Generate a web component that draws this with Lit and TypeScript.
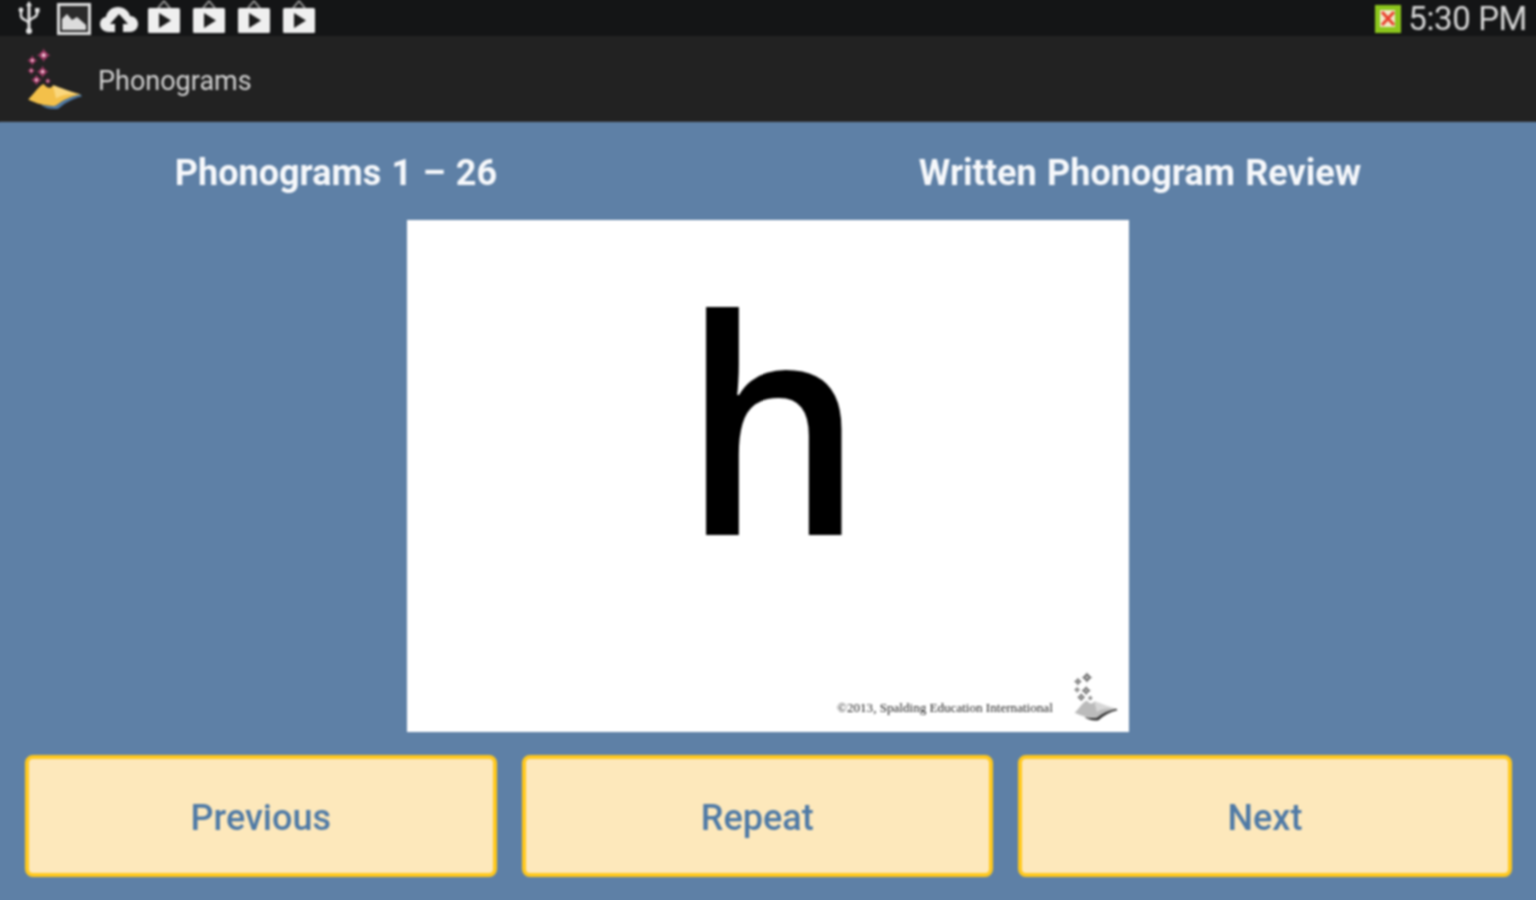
import { LitElement, html, css, svg } from 'lit'
import { customElement } from 'lit/decorators.js'

// little notification icon with the tab on top and a play triangle
const playNote = html`<svg class="note" width="34" height="36" viewBox="0 0 34 36">
  <path d="M11 8 L17 1 L23 8" fill="none" stroke="#8a8a8a" stroke-width="2"/>
  <rect x="1" y="8" width="32" height="25" rx="1.5" fill="#efefef"/>
  <path d="M12 13 L24 20.5 L12 28 Z" fill="#1a1a1a"/>
</svg>`

const star = (x: number, y: number, r: number, c: string, mid: string) => svg`
  <path d="M${x} ${y - r * 1.5} L${x + r * 0.4} ${y - r * 0.4} L${x + r * 1.5} ${y} L${x + r * 0.4} ${y + r * 0.4} L${x} ${y + r * 1.5} L${x - r * 0.4} ${y + r * 0.4} L${x - r * 1.5} ${y} L${x - r * 0.4} ${y - r * 0.4} Z" fill="${c}"/>
  <circle cx="${x}" cy="${y}" r="${r * 0.85}" fill="${c}"/>
  <circle cx="${x}" cy="${y}" r="${r * 0.4}" fill="${mid}"/>
`

const bookLogo = (c1: string, mid: string, c2: string, c3: string, c4: string) => svg`
  ${star(17, 7, 4.5, c1, mid)}${star(6, 12, 3.4, c1, mid)}${star(5, 22, 2.6, c1, mid)}
  ${star(16, 23, 4, c1, mid)}${star(10, 31, 3.6, c1, mid)}${star(21, 32, 2.2, c1, mid)}
  <path d="M2 50 C9 43 12 37 17 35 C20 39 24 40 26 36 C33 38 41 42 53 45 C44 47 36 50 29 56 C22 57 12 55 2 50 Z" fill="${c2}"/>
  <path d="M29 56 C36 50 44 47 53 45 L54 47 C45 49 38 53 31 59 C24 60 18 58 14 55 C19 56 24 57 29 56 Z" fill="${c3}"/>
  <path d="M26 36 C33 38 41 42 53 45 C46 45 37 44 29 49 Z" fill="${c4}" opacity="0.55"/>
`

@customElement('app-root')
export class AppRoot extends LitElement {
  static styles = css`
    :host {
      display: block;
      width: 1536px;
      height: 900px;
      overflow: hidden;
      font-family: Roboto, "Liberation Sans", sans-serif;
    }
    /* blur bleeds at the edges, so the page sticks out 6px on each side */
    .page {
      display: flex;
      flex-direction: column;
      width: 1536px;
      height: 900px;
      margin: -6px;
      padding: 6px;
      background: linear-gradient(#141516 42px, #222222 42px, #222222 128px, #5e80a6 128px);
      filter: blur(1px);
    }
    .status {
      height: 36px;
      flex: none;
      background: #141516;
      display: flex;
      align-items: center;
      padding: 0 9px 0 17px;
      color: #d6d6d6;
    }
    .status .icons {
      display: flex;
      align-items: center;
      gap: 11px;
    }
    .usb { margin-right: 5px; }
    .cloud { margin: 0 -2px; }
    .status .right {
      margin-left: auto;
      display: flex;
      align-items: center;
      gap: 7px;
      font-size: 33px;
      letter-spacing: -0.4px;
    }
    .status .right span { padding-top: 1px; }
    .actionbar {
      height: 86px;
      flex: none;
      background: #222222;
      display: flex;
      align-items: center;
      padding: 4px 0 0 26px;
      gap: 14px;
      color: #d2d2d2;
      font-size: 27px;
      border-bottom: 1px solid #333;
      box-sizing: border-box;
    }
    .headings {
      flex: none;
      height: 98px;
      display: grid;
      grid-template-columns: 622px 744px;
      column-gap: 121px;
      padding: 4px 0 0 25px;
      box-sizing: border-box;
      align-items: center;
      color: #f6f8fb;
      font-size: 36px;
      word-spacing: 1.5px;
      font-weight: 700;
      text-align: center;
    }
    .card {
      flex: none;
      align-self: center;
      width: 722px;
      height: 511.5px;
      background: #fff;
      position: relative;
      display: flex;
      justify-content: center;
      box-sizing: border-box;
      padding-left: 11px;
    }
    .letter {
      font-family: "Open Sans", "Liberation Sans", sans-serif;
      font-size: 300px;
      font-weight: 600;
      line-height: 360px;
      color: #000;
      margin-top: 19px;
      transform: scaleX(0.95);
    }
    .copy {
      position: absolute;
      left: 430px;
      top: 480px;
      font-family: "Liberation Serif", serif;
      font-size: 13.1px;
      line-height: 16px;
      color: #222;
      white-space: nowrap;
      filter: blur(0.7px);
    }
    .mark {
      position: absolute;
      left: 666px;
      top: 450px;
      filter: blur(0.5px);
    }
    .buttons {
      display: grid;
      grid-template-columns: 471.5px 471.5px 494px;
      column-gap: 25px;
      padding: 23.5px 0 0 25px;
    }
    .btn {
      height: 121.5px;
      box-sizing: border-box;
      background: #fde8bb;
      border: 4px solid #ffc81e;
      border-radius: 8px;
      padding-top: 5px;
      display: flex;
      align-items: center;
      justify-content: center;
      color: #4f7aa6;
      font-size: 36px;
      font-weight: 500;
    }
  `

  render() {
    return html`
      <div class="page">
        <div class="status">
          <div class="icons">
            <svg class="usb" width="24" height="36" viewBox="0 0 24 36">
              <path d="M12 3 V33" stroke="#e4e4e4" stroke-width="3" fill="none"/>
              <path d="M12 1 L15 6 H9 Z" fill="#e4e4e4"/>
              <path d="M4 11 V16 C4 20 12 20 12 24 M20 11 V14 C20 18 12 18 12 22" stroke="#e4e4e4" stroke-width="2.4" fill="none"/>
              <circle cx="4" cy="10" r="2.4" fill="#e4e4e4"/>
              <rect x="18" y="8" width="4.5" height="4.5" fill="#e4e4e4"/>
              <circle cx="12" cy="31" r="3" fill="#e4e4e4"/>
            </svg>
            <svg width="34" height="34" viewBox="0 0 34 34">
              <rect x="1.5" y="3.5" width="31" height="29" fill="#2a2a2a" stroke="#dcdcdc" stroke-width="3"/>
              <path d="M5 29 V18 L10 13 L15 19 L20 16 L29 24 V29 Z" fill="#dcdcdc"/>
            </svg>
            <svg class="cloud" width="38" height="34" viewBox="0 0 38 34">
              <path d="M9 31 C3 31 0 27 0 23 C0 19 3 16 6 16 C7 10 12 6 18 6 C24 6 29 10 30 15 C35 15 38 19 38 23 C38 28 34 31 30 31 H23 V23 H28 L19 13 L10 23 H15 V31 Z" fill="#ececec"/>
            </svg>
            ${playNote}${playNote}${playNote}${playNote}
          </div>
          <div class="right">
            <svg width="26" height="30" viewBox="0 0 26 30">
              <rect width="26" height="28" y="2" fill="#8cc61d"/>
              <rect x="5" y="7" width="15" height="17" fill="#f2e9c8"/>
              <path d="M7 9 L19 22 M19 9 L7 22" stroke="#e8402c" stroke-width="3"/>
            </svg>
            <span>5:30 PM</span>
          </div>
        </div>
        <div class="actionbar">
          <svg width="58" height="66" viewBox="0 0 56 64">${bookLogo('#a03a66', '#f0c8d8', '#f3c04a', '#4f7aa6', '#ffe9a8')}</svg>
          <span>Phonograms</span>
        </div>
        <div class="headings">
          <div>Phonograms 1 – 26</div>
          <div>Written Phonogram Review</div>
        </div>
        <div class="card">
          <div class="letter">h</div>
          <div class="copy">©2013, Spalding Education International</div>
          <svg class="mark" width="46" height="56" viewBox="0 0 56 64">${bookLogo('#666', '#ccc', '#bbb', '#333', '#eee')}</svg>
        </div>
        <div class="buttons">
          <div class="btn">Previous</div>
          <div class="btn">Repeat</div>
          <div class="btn">Next</div>
        </div>
      </div>
    `
  }
}
